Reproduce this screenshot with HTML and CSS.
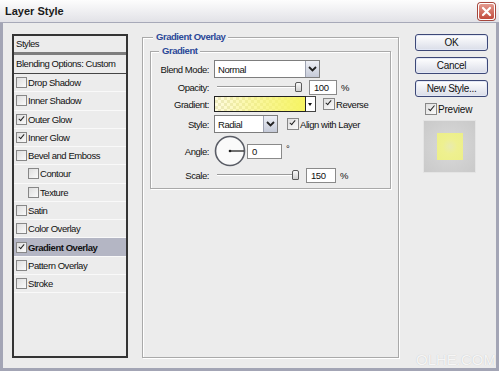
FILE: index.html
```html
<!DOCTYPE html>
<html lang="en">
<head>
  <meta charset="UTF-8">
  <title>Layer Style</title>
  <link rel="stylesheet" href="styles.css">
</head>
<body>
  <div class="window">
    <div class="titlebar">
      <span class="title">Layer Style</span>
      <span class="close">
        <svg width="11" height="11" viewBox="0 0 11 11"><path d="M2 2 L9 9 M9 2 L2 9" stroke="#fff" stroke-width="2.2" stroke-linecap="round"/></svg>
      </span>
    </div>

    <div class="frame">
      <div class="styles-list">
        <div class="list-head">Styles</div>
        <div class="list-blend">Blending Options: Custom</div>
        <div class="list-item"><span class="cb"></span>Drop Shadow</div>
        <div class="list-item"><span class="cb"></span>Inner Shadow</div>
        <div class="list-item"><span class="cb on"></span>Outer Glow</div>
        <div class="list-item"><span class="cb on"></span>Inner Glow</div>
        <div class="list-item"><span class="cb"></span>Bevel and Emboss</div>
        <div class="list-item sub"><span class="cb"></span>Contour</div>
        <div class="list-item sub"><span class="cb"></span>Texture</div>
        <div class="list-item"><span class="cb"></span>Satin</div>
        <div class="list-item"><span class="cb"></span>Color Overlay</div>
        <div class="list-item active"><span class="cb on"></span>Gradient Overlay</div>
        <div class="list-item"><span class="cb"></span>Pattern Overlay</div>
        <div class="list-item"><span class="cb"></span>Stroke</div>
      </div>

      <fieldset class="group outer">
        <legend>Gradient Overlay</legend>
        <fieldset class="group inner">
          <legend>Gradient</legend>

          <div class="row r-blend">
            <span class="lbl">Blend Mode:</span>
            <div class="select blend"><span>Normal</span><span class="drop"><svg width="9" height="6" viewBox="0 0 9 6"><path d="M1 1 L4.5 4.5 L8 1" fill="none" stroke="#222" stroke-width="1.8"/></svg></span></div>
          </div>

          <div class="row r-opacity">
            <span class="lbl">Opacity:</span>
            <div class="slider op"><span class="thumb"></span></div>
            <span class="field f-op">100</span>
            <span class="unit">%</span>
          </div>

          <div class="row r-gradient">
            <span class="lbl">Gradient:</span>
            <div class="swatch"></div>
            <span class="gdrop"></span>
            <span class="check-label rev"><span class="cb on"></span>Reverse</span>
          </div>

          <div class="row r-style">
            <span class="lbl">Style:</span>
            <div class="select style"><span>Radial</span><span class="drop"><svg width="9" height="6" viewBox="0 0 9 6"><path d="M1 1 L4.5 4.5 L8 1" fill="none" stroke="#222" stroke-width="1.8"/></svg></span></div>
            <span class="check-label align"><span class="cb on"></span>Align with Layer</span>
          </div>

          <div class="row r-angle">
            <span class="lbl">Angle:</span>
            <svg class="dial" width="32" height="32" viewBox="0 0 32 32">
              <circle cx="16" cy="16" r="14.5" fill="#fafafa" stroke="#5a5d66" stroke-width="1.6"/>
              <line x1="16" y1="16" x2="30" y2="16" stroke="#333" stroke-width="1.4"/>
              <circle cx="16" cy="16" r="1.3" fill="#222"/>
            </svg>
            <span class="field f-angle">0</span>
            <span class="unit deg">°</span>
          </div>

          <div class="row r-scale">
            <span class="lbl">Scale:</span>
            <div class="slider sc"><span class="thumb"></span></div>
            <span class="field f-sc">150</span>
            <span class="unit">%</span>
          </div>
        </fieldset>
      </fieldset>

      <div class="side">
        <button class="btn">OK</button>
        <button class="btn">Cancel</button>
        <button class="btn">New Style...</button>
        <div class="preview-check"><span class="cb big on"></span>Preview</div>
        <div class="thumb-box"><div class="thumb-swatch"></div></div>
      </div>
    </div>

    <div class="watermark">OLHE.COM</div>
  </div>
</body>
</html>
```

FILE: styles.css
```css
body {
  margin: 0;
  font-family: "Liberation Sans", Arial, sans-serif;
  font-size: 9.5px;
  letter-spacing: -0.45px;
  color: #111;
  background: #ececec;
}

.window {
  position: relative;
  width: 499px;
  height: 371px;
  display: flex;
  flex-direction: column;
  background: #ececec;
  overflow: hidden;
}

.titlebar {
  height: 22px;
  flex: none;
  display: flex;
  align-items: center;
  justify-content: space-between;
  padding: 0 4px 0 5px;
  background: linear-gradient(#fdfdfd, #e2e2e7);
  border-bottom: 1px solid #a7a9b8;
}

.title {
  font-size: 11px;
  font-weight: bold;
  letter-spacing: 0;
  color: #1a1a1a;
}

.close {
  width: 15px;
  height: 15px;
  border-radius: 3px;
  border: 1px solid #fff;
  box-shadow: 0 0 0 1px #a4463c;
  background: linear-gradient(#e49a8e, #c24a3c);
  display: flex;
  align-items: center;
  justify-content: center;
}

.frame {
  flex: 1;
  display: flex;
  align-items: flex-start;
  border: 3px solid #a3a5b5;
  border-top: 0;
  padding: 8px 0 0 9px;
}

/* styles list */
.styles-list {
  width: 116px;
  height: 324px;
  box-sizing: border-box;
  margin-top: 3px;
  border: 2px solid #343434;
  flex: none;
}

.list-head {
  height: 16px;
  line-height: 16px;
  padding-left: 2px;
  border-bottom: 3px solid #7e7e7e;
}

.list-blend {
  height: 18px;
  line-height: 18px;
  padding-left: 2px;
  border-bottom: 1px solid #454545;
}

.list-item {
  height: 17.27px;
  display: flex;
  align-items: center;
  gap: 1px;
  padding-left: 2px;
  border-bottom: 1px solid #f9f9f9;
}

.list-item.sub {
  padding-left: 14px;
}

.list-item.active {
  background: #b4b6c4;
  font-weight: bold;
}

.cb {
  position: relative;
  flex: none;
  width: 9px;
  height: 9px;
  border: 1px solid #878787;
  background: linear-gradient(135deg, #dedede, #fafafa);
}

.cb.big {
  width: 10px;
  height: 10px;
}

.cb.on::after {
  content: "";
  position: absolute;
  left: 3px;
  top: 0;
  width: 2px;
  height: 5px;
  border: solid #222;
  border-width: 0 1.5px 1.5px 0;
  transform: rotate(40deg);
}

.cb.big.on::after {
  left: 3.5px;
  height: 6px;
}

/* fieldsets */
.group {
  margin: 0;
  padding: 0;
  box-sizing: border-box;
  border: 1px solid #a9a9a9;
  box-shadow: inset 1px 1px 0 #fff, 1px 1px 0 #fff;
}

.group legend {
  padding: 0 3px;
  line-height: 12px;
  font-weight: bold;
  color: #2a4898;
  background: #ececec;
}

.outer {
  margin-left: 14px;
  width: 257px;
  height: 327px;
  flex: none;
}

.outer > legend {
  margin-left: 10px;
}

.inner {
  margin: 2px 0 0 7px;
  width: 241px;
  height: 144px;
}

.inner > legend {
  margin-left: 8px;
}

.row {
  display: flex;
  align-items: center;
}

.lbl {
  width: 58px;
  margin-right: 5px;
  text-align: right;
  flex: none;
}

.r-blend { height: 18px; margin-top: 3px; }
.r-opacity { height: 16px; margin-top: 1px; }
.r-gradient { height: 16px; margin-top: 1px; }
.r-style { height: 18px; margin-top: 3px; }
.r-angle { height: 32px; margin-top: 2px; }
.r-scale { height: 16px; }

.select {
  height: 18px;
  box-sizing: border-box;
  border: 1px solid #7d7d7d;
  background: #fff;
  display: flex;
  align-items: center;
  justify-content: space-between;
  padding-left: 3px;
}

.select.blend { width: 106px; }
.select.style { width: 64px; height: 18px; }

.drop {
  width: 13px;
  height: 100%;
  border-left: 1px solid #9ea3b2;
  background: linear-gradient(#eef0f6, #c5cad8);
  display: flex;
  align-items: center;
  justify-content: center;
}

.slider {
  position: relative;
  height: 12px;
  flex: none;
}

.slider::before {
  content: "";
  position: absolute;
  left: 3px;
  right: 6px;
  top: 5px;
  height: 1px;
  background: #9a9a9a;
  box-shadow: 0 1px 0 #fff;
}

.slider.op { width: 91px; margin-right: 4px; }
.slider.sc { width: 88px; margin-right: 4px; }

.thumb {
  position: absolute;
  right: 3px;
  top: 1px;
  width: 5px;
  height: 8px;
  border: 1px solid #5b5b5b;
  border-radius: 2px 2px 1px 1px;
  background: linear-gradient(#fafafa, #cfcfcf);
}

.field {
  height: 15px;
  box-sizing: border-box;
  border: 1px solid #8a8a8a;
  background: #fff;
  padding-left: 4px;
  line-height: 13px;
  flex: none;
}

.f-op { width: 28px; }
.f-sc { width: 30px; }
.f-angle { width: 35px; margin-left: 1px; }

.unit {
  margin-left: 4px;
}

.unit.deg {
  align-self: flex-start;
  margin-top: 8px;
}

.swatch {
  width: 92px;
  height: 16px;
  box-sizing: border-box;
  border: 1px solid #222;
  flex: none;
  background:
    linear-gradient(to right, rgba(247, 244, 110, 0.05), rgba(247, 244, 100, 0.5) 40%, #f6f462),
    repeating-conic-gradient(#ece9c4 0 25%, #fffbe6 0 50%) 0 0 / 6px 6px;
}

.gdrop {
  position: relative;
  width: 10px;
  height: 16px;
  box-sizing: border-box;
  border: 1px solid #444;
  border-left: 0;
  background: #fff;
  flex: none;
}

.gdrop::after {
  content: "";
  position: absolute;
  left: 2px;
  top: 6px;
  border: 2.5px solid transparent;
  border-top: 3px solid #111;
}

.check-label {
  display: flex;
  align-items: center;
  gap: 1px;
}

.check-label .cb {
  width: 10px;
  height: 10px;
}

.rev { margin-left: 7px; }
.align { margin-left: 9px; }

.dial {
  flex: none;
}

/* right column */
.side {
  margin: 3px 0 0 16px;
  width: 73px;
  display: flex;
  flex-direction: column;
  flex: none;
}

.btn {
  height: 17px;
  margin: 0 0 6px;
  padding: 0;
  border: 1px solid #3d4877;
  border-radius: 3px;
  background: linear-gradient(#ffffff, #dadde8);
  box-shadow: inset 0 0 0 1px #e3e8f5;
  font-family: "Liberation Sans", Arial, sans-serif;
  font-size: 10px;
  letter-spacing: -0.3px;
  color: #111;
}

.preview-check {
  display: flex;
  align-items: center;
  gap: 1px;
  height: 12px;
  padding-left: 10px;
  font-size: 10px;
  letter-spacing: -0.2px;
}

.thumb-box {
  margin: 5px 0 0 8px;
  width: 53px;
  height: 53px;
  box-sizing: border-box;
  border: 1px solid #e4e4e4;
  background: radial-gradient(#dadada, #c9c9c9);
  display: flex;
  align-items: center;
  justify-content: center;
}

.thumb-swatch {
  width: 26px;
  height: 27px;
  background: radial-gradient(circle, #e9ebb0 0, #eef090 40%, #ecef88 100%);
}

.watermark {
  position: absolute;
  right: 3px;
  bottom: 3px;
  font-size: 15px;
  letter-spacing: 0;
  color: rgba(255, 255, 255, 0.85);
  text-shadow: 0 0 1px rgba(0, 0, 0, 0.2);
}
```
